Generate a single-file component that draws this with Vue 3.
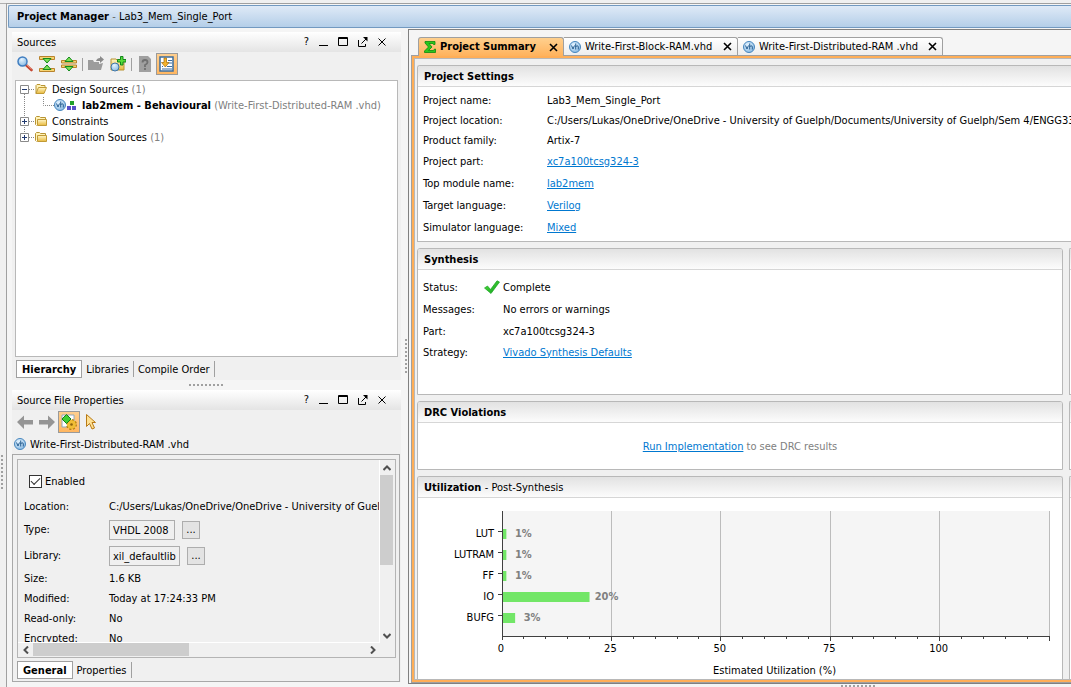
<script setup>
import { ref } from 'vue'

const enabled = ref(true)

const settings = [
  { label: 'Project name:', value: 'Lab3_Mem_Single_Port' },
  { label: 'Project location:', value: 'C:/Users/Lukas/OneDrive/OneDrive - University of Guelph/Documents/University of Guelph/Sem 4/ENGG3380' },
  { label: 'Product family:', value: 'Artix-7' },
  { label: 'Project part:', value: 'xc7a100tcsg324-3', link: true },
  { label: 'Top module name:', value: 'lab2mem', link: true },
  { label: 'Target language:', value: 'Verilog', link: true },
  { label: 'Simulator language:', value: 'Mixed', link: true },
]

const details = [
  { label: 'Size:', value: '1.6 KB' },
  { label: 'Modified:', value: 'Today at 17:24:33 PM' },
  { label: 'Read-only:', value: 'No' },
  { label: 'Encrypted:', value: 'No' },
]

const fields = [
  { id: 'type', label: 'Type:', value: 'VHDL 2008' },
  { id: 'library', label: 'Library:', value: 'xil_defaultlib' },
]

const editorTabs = [
  { id: 'block', label: 'Write-First-Block-RAM.vhd' },
  { id: 'dist', label: 'Write-First-Distributed-RAM .vhd' },
]

const axisMax = 125
const bars = [
  { name: 'LUT', value: 1 },
  { name: 'LUTRAM', value: 1 },
  { name: 'FF', value: 1 },
  { name: 'IO', value: 20 },
  { name: 'BUFG', value: 3 },
]
const pct = (v) => (v / axisMax) * 100 + '%'
const majors = [25, 50, 75, 100, 125]
const axisLabels = [0, 25, 50, 75, 100]
const minors = Array.from({ length: 24 }, (_, i) => (i + 1) * 5).filter((v) => v % 25)
</script>

<template>
  <div class="app">
    <svg class="defs" width="0" height="0" aria-hidden="true">
      <defs>
        <linearGradient id="gold" x1="0" y1="0" x2="0" y2="1">
          <stop offset="0" stop-color="#fff6c8" /><stop offset="1" stop-color="#e8b93c" />
        </linearGradient>
        <radialGradient id="ball" cx=".4" cy=".3" r=".8">
          <stop offset="0" stop-color="#e4f3ff" /><stop offset="1" stop-color="#7fb4e0" />
        </radialGradient>
        <linearGradient id="leaf" x1="0" y1="0" x2="1" y2="1">
          <stop offset="0" stop-color="#54e63c" /><stop offset="1" stop-color="#0f9a1e" />
        </linearGradient>
        <symbol id="vh" viewBox="0 0 12 12">
          <circle cx="6" cy="6" r="5.5" fill="url(#ball)" stroke="#4585bd" />
          <path d="M2.5 4.5 4 8l1.5-3.5M6.7 2.5V8.5M6.7 6Q7 4.8 8.2 4.8 9.3 4.8 9.3 6V8.5" fill="none" stroke="#285f92" />
        </symbol>
        <symbol id="folder" viewBox="0 0 12 11">
          <path d="M.5 8.5v-7l1-1h3l1 1h5v2M.5 8.5l1 1" fill="#fff3b8" stroke="#b89434" />
          <path d="M2.5 3.5h9v6h-9z" fill="url(#gold)" stroke="#c19a35" />
        </symbol>
        <symbol id="folder-open" viewBox="0 0 12 11">
          <path d="M1 9.5V1.5l1-1h3l1 1h4v2" fill="#fff3b8" stroke="#b89434" />
          <path d="M3.5 3.5h8l-2.5 6H1z" fill="url(#gold)" stroke="#c19a35" />
        </symbol>
        <symbol id="x" viewBox="0 0 9 9">
          <path d="M1 1 8 8M8 1 1 8" stroke="#000" stroke-width="1.6" />
        </symbol>
      </defs>
    </svg>

    <div class="edge"><i class="grip vertical"></i></div>

    <div class="shell">
      <header class="banner"><b>Project Manager</b><span class="dash"> - </span>Lab3_Mem_Single_Port</header>

      <div class="work">
        <aside class="side">
          <section class="sources">
            <div class="titlebar">
              <h2>Sources</h2>
              <div class="winbtns">
                <button aria-label="Help">?</button>
                <button aria-label="Minimize"><svg width="9" height="10"><path d="M0 8.500h9" stroke="#000" /></svg></button>
                <button aria-label="Maximize"><svg width="10" height="10"><path d="M.5.500h9v8h-9zM0 1.500h10" fill="none" stroke="#000" /></svg></button>
                <button aria-label="Float"><svg width="10" height="10"><path d="M.5 3v6.500h7V7M3.500 6.500 8 2" fill="none" stroke="#000" /><path d="M5 0h4.500v4.500z" /></svg></button>
                <button aria-label="Close"><svg width="8" height="8"><path d="M.5.5l7 7M7.500.5l-7 7" stroke="#000" /></svg></button>
              </div>
            </div>
            <div class="toolbar">
              <button aria-label="Search">
                <svg width="16" height="16"><path d="M9 9l5.500 5" stroke="#c44530" stroke-width="2.600" stroke-linecap="round" /><path d="M9 8l5.500 5" stroke="#f0a090" /><circle cx="5.500" cy="5.500" r="4.500" fill="url(#ball)" stroke="#3f7dc0" stroke-width="1.500" /></svg>
              </button>
              <button aria-label="Collapse all">
                <svg width="16" height="16"><path d="M.5.5h15v3h-15zM.5 12.500h15v3h-15z" fill="#f6d472" stroke="#b8832c" /><path d="M4 2.500h8L8 7zM4 13.500h8L8 9z" fill="#7ddf55" stroke="#128a1c" /></svg>
              </button>
              <button aria-label="Expand all">
                <svg width="16" height="16"><path d="M.5 4.500h15v2.500h-15zM.5 9h15v2.500h-15z" fill="#f6d472" stroke="#b8832c" /><path d="M4 5.500h8L8 1zM4 10.500h8L8 15z" fill="#7ddf55" stroke="#128a1c" /></svg>
              </button>
              <i class="sep"></i>
              <button aria-label="Open file" disabled>
                <svg width="16" height="16"><path d="M0 14V4h5l1 2h5v2l4-1-2 7z" fill="#9c9c9c" /><path d="M8 5q1-3 4-3V0l4 3.500L12 7V5q-2 0-4 0z" fill="#8b8b8b" /></svg>
              </button>
              <button aria-label="Add sources">
                <svg width="16" height="16"><path d="M1 14V3h5l1 1h7v10z" fill="url(#gold)" stroke="#b89434" /><circle cx="5" cy="11" r="4" fill="url(#ball)" stroke="#4076a8" /><path d="M10.500.5h2.500v3h3V6h-3v3h-2.500V6h-3V3.500h3z" fill="#56dc3a" stroke="#13871d" /></svg>
              </button>
              <i class="sep"></i>
              <button aria-label="Information" disabled>
                <svg width="16" height="16"><path d="M2 0h9l3 3v13H2z" fill="#a0a0a0" /><path d="M5.500 6.500Q5.500 4 8 4t2.500 2.300Q10.500 8 8 9v2M8 12v2" fill="none" stroke="#707070" stroke-width="1.800" /></svg>
              </button>
              <button class="on" aria-label="Auto scroll">
                <svg width="16" height="16"><path d="M1 1h13v14H1z" fill="#fff" stroke="#3b6da0" stroke-width="1.500" /><path d="M9 4.500h4M9 7h4M3 10.500h1M8 10.500h5M3 13h10" stroke="#3b6da0" /><path d="M5 2h2.500v4.500H10L6.300 11 2.500 6.500H5z" fill="#f6b42c" stroke="#a36a08" stroke-width=".7" /></svg>
              </button>
            </div>
            <ul class="tree">
              <li>
                <svg width="19" height="16"><path d="M8.500 13v3M13 8.500h6" class="dots" /><path d="M4.500 4.500h8v8h-8z" class="box" /><path d="M6 8.500h5" stroke="#223a70" /></svg>
                <svg class="fold" width="12" height="11"><use href="#folder-open" /></svg>
                <span>Design Sources <em>(1)</em></span>
              </li>
              <li>
                <svg width="38" height="16"><path d="M8.500 0v16M27.500 0v8.500H38" class="dots" /></svg>
                <svg width="12" height="12"><use href="#vh" /></svg>
                <svg class="mods" width="9" height="9"><path d="M3 0h4v4H3z" fill="#23a12b" /><path d="M0 5h4v4H0zM5 5h4v4H5z" fill="#5850c8" /></svg>
                <span><b>lab2mem - Behavioural</b> <em>(Write-First-Distributed-RAM .vhd)</em></span>
              </li>
              <li>
                <svg width="19" height="16"><path d="M8.500 0v16M13 8.500h6" class="dots" /><path d="M4.500 4.500h8v8h-8z" class="box" /><path d="M6 8.500h5M8.500 6v5" stroke="#223a70" /></svg>
                <svg class="fold" width="12" height="11"><use href="#folder" /></svg>
                <span>Constraints</span>
              </li>
              <li>
                <svg width="19" height="16"><path d="M8.500 0v4M13 8.500h6" class="dots" /><path d="M4.500 4.500h8v8h-8z" class="box" /><path d="M6 8.500h5M8.500 6v5" stroke="#223a70" /></svg>
                <svg class="fold" width="12" height="11"><use href="#folder" /></svg>
                <span>Simulation Sources <em>(1)</em></span>
              </li>
            </ul>
            <nav class="subtabs">
              <button class="active">Hierarchy</button>
              <button>Libraries</button>
              <button>Compile Order</button>
            </nav>
          </section>

          <div class="hsplit"><i class="grip"></i></div>

          <section class="props">
            <div class="titlebar">
              <h2>Source File Properties</h2>
              <div class="winbtns">
                <button aria-label="Help">?</button>
                <button aria-label="Minimize"><svg width="9" height="10"><path d="M0 8.500h9" stroke="#000" /></svg></button>
                <button aria-label="Maximize"><svg width="10" height="10"><path d="M.5.500h9v8h-9zM0 1.500h10" fill="none" stroke="#000" /></svg></button>
                <button aria-label="Float"><svg width="10" height="10"><path d="M.5 3v6.500h7V7M3.500 6.500 8 2" fill="none" stroke="#000" /><path d="M5 0h4.500v4.500z" /></svg></button>
                <button aria-label="Close"><svg width="8" height="8"><path d="M.5.5l7 7M7.500.5l-7 7" stroke="#000" /></svg></button>
              </div>
            </div>
            <div class="toolbar short">
              <button aria-label="Back" disabled><svg width="16" height="16"><path d="M0 8l7-6.500V6h9v4.500H7V15z" fill="#959595" /></svg></button>
              <button aria-label="Forward" disabled><svg width="16" height="16"><path d="M16 8L9 1.500V6H0v4.500h9V15z" fill="#959595" /></svg></button>
              <button class="on" aria-label="Auto update">
                <svg width="16" height="16"><path d="M1 1h12v12H1z" fill="#fff" stroke="#8fa8bd" /><circle cx="10.500" cy="10.500" r="4.500" fill="#f0bc30" stroke="#b5830f" stroke-width="2" stroke-dasharray="2 1.500" /><circle cx="10.500" cy="10.500" r="4.300" fill="#f0bd35" /><circle cx="10.500" cy="10.500" r="1.300" fill="#8a6110" /><path d="M5.500.5 10 5l-4.500 4.500L1 5z" fill="#3fce33" stroke="#167f18" /></svg>
              </button>
              <button aria-label="Select"><svg width="16" height="16"><path d="M3.500.5v12l3-3 2.500 5.500 2.500-1L9 8.500h3.500z" fill="#ffe092" stroke="#b87a16" /></svg></button>
            </div>
            <div class="filename"><svg width="12" height="12"><use href="#vh" /></svg><span>Write-First-Distributed-RAM .vhd</span></div>
            <div class="outer">
              <div class="scroller">
                <div class="form">
                  <label class="check"><input v-model="enabled" type="checkbox" />Enabled</label>
                  <div class="row"><span>Location:</span><span>C:/Users/Lukas/OneDrive/OneDrive - University of Guelph</span></div>
                  <div v-for="f in fields" :key="f.id" class="row tall">
                    <label :for="f.id">{{ f.label }}</label>
                    <input :id="f.id" :class="f.id" type="text" readonly :value="f.value" />
                    <button class="more" :aria-label="'Choose ' + f.id">...</button>
                  </div>
                  <div v-for="d in details" :key="d.label" class="row"><span>{{ d.label }}</span><span>{{ d.value }}</span></div>
                </div>
                <div class="vbar">
                  <button aria-label="Scroll up"><svg width="8" height="6"><path d="M.5 5 4 1.500 7.500 5" class="chev" /></svg></button>
                  <i></i>
                  <button aria-label="Scroll down"><svg width="8" height="6"><path d="M.5 1 4 4.500 7.500 1" class="chev" /></svg></button>
                </div>
                <div class="hbar">
                  <button aria-label="Scroll left"><svg width="6" height="8"><path d="M5 .5 1.500 4 5 7.500" class="chev" /></svg></button>
                  <i></i>
                  <button aria-label="Scroll right"><svg width="6" height="8"><path d="M1 .5 4.500 4 1 7.500" class="chev" /></svg></button>
                </div>
              </div>
              <nav class="subtabs">
                <button class="active">General</button>
                <button>Properties</button>
              </nav>
            </div>
          </section>
        </aside>

        <div class="vsplit"><i class="grip vertical"></i></div>

        <div class="mainwrap">
          <main class="editor">
            <div class="tabs">
              <div class="tab current">
                <svg width="12" height="12"><path d="M1 .5h10V3.500H9.500L9 2.500H5L8 6 4.500 9.500H9.500L10.500 8h1v3.500H.5V10L4.500 6 1 2z" fill="#2bc71c" stroke="#0c8a10" stroke-width=".8" /></svg>
                <b>Project Summary</b>
                <button aria-label="Close Project Summary"><svg width="9" height="9"><use href="#x" /></svg></button>
              </div>
              <div v-for="t in editorTabs" :key="t.id" class="tab" :class="t.id">
                <svg width="12" height="12"><use href="#vh" /></svg>
                <span>{{ t.label }}</span>
                <button :aria-label="'Close ' + t.label"><svg width="9" height="9"><use href="#x" /></svg></button>
              </div>
            </div>

            <div class="page">
              <section class="panel settings">
                <h3>Project Settings</h3>
                <dl>
                  <div v-for="s in settings" :key="s.label" :class="{ linked: s.link }">
                    <dt>{{ s.label }}</dt>
                    <dd><a v-if="s.link" href="#">{{ s.value }}</a><template v-else>{{ s.value }}</template></dd>
                  </div>
                </dl>
              </section>

              <section class="panel synthesis">
                <h3>Synthesis</h3>
                <dl>
                  <div class="linked">
                    <dt>Status:</dt>
                    <dd><svg class="tick" width="16" height="14"><path d="M.5 8 3.500 6 6.500 9.500 13 .8 15.500 2 7 13.500z" fill="url(#leaf)" stroke="#17a023" stroke-width=".7" /></svg>Complete</dd>
                  </div>
                  <div class="linked"><dt>Messages:</dt><dd>No errors or warnings</dd></div>
                  <div><dt>Part:</dt><dd>xc7a100tcsg324-3</dd></div>
                  <div><dt>Strategy:</dt><dd><a href="#">Vivado Synthesis Defaults</a></dd></div>
                </dl>
              </section>
              <section class="panel next"><h3></h3></section>

              <section class="panel drc">
                <h3>DRC Violations</h3>
                <p><a href="#">Run Implementation</a> to see DRC results</p>
              </section>
              <section class="panel next"><h3></h3></section>

              <section class="panel util">
                <h3>Utilization <span>- Post-Synthesis</span></h3>
                <div class="chart">
                  <svg width="100%" height="168" role="img" aria-label="Estimated utilization by resource">
                    <rect width="100%" height="125" fill="#f5f5f5" />
                    <line v-for="m in majors" :key="m" :x1="pct(m)" :x2="pct(m)" y1="0" y2="125" stroke="#bcbcbc" />
                    <g v-for="(b, i) in bars" :key="b.name">
                      <rect x="0" :y="18 + i * 21" :width="pct(b.value)" height="10" fill="#72e667" />
                      <line x1="-4" x2="0" :y1="20 + i * 21" :y2="20 + i * 21" class="axis" />
                      <text x="-8" :y="26 + i * 21" text-anchor="end">{{ b.name }}</text>
                      <text :x="pct(b.value)" dx="17" :y="26 + i * 21" text-anchor="middle" class="val">{{ b.value }}%</text>
                    </g>
                    <line x1="0" x2="0" y1="0" y2="129" class="axis" />
                    <line x1="0" x2="100%" y1="125" y2="125" class="axis" />
                    <line v-for="m in minors" :key="m" :x1="pct(m)" :x2="pct(m)" y1="125" y2="128" class="axis" />
                    <line v-for="m in majors" :key="'t' + m" :x1="pct(m)" :x2="pct(m)" y1="125" y2="130" class="axis" />
                    <text v-for="a in axisLabels" :key="a" :x="pct(a)" dx="-1" y="141" text-anchor="middle">{{ a }}</text>
                    <text x="50%" dx="-1" y="163" text-anchor="middle">Estimated Utilization (%)</text>
                  </svg>
                </div>
              </section>
              <section class="panel next"><h3></h3></section>
            </div>
          </main>
          <div class="foot"><i class="grip"></i></div>
        </div>
      </div>
    </div>
  </div>
</template>

<style>
body { background: #f0f0f0; overflow: hidden; }
</style>

<style scoped>
.app {
  box-sizing: border-box;
  height: 100vh;
  padding-top: 3px;
  display: flex;
  background: #f0f0f0;
  color: #000;
  font: 11px/16px "DejaVu Sans Condensed", "DejaVu Sans", sans-serif;
  white-space: nowrap;
}
.app *, .app *::after { box-sizing: border-box; }
.defs { position: absolute; }
svg { display: block; flex: none; }
button { font: inherit; color: inherit; border: 0; padding: 0; margin: 0; background: none; display: flex; align-items: center; justify-content: center; flex: none; }
h2, h3, p, dl, dd, ul { margin: 0; padding: 0; font-size: inherit; }
a { color: #0078d0; }
em { font-style: normal; color: #808080; }

.edge { width: 6px; flex: none; display: flex; align-items: flex-end; padding: 0 0 197px 1px; border-top: 1px solid #b0b0b0; }
.grip { display: block; width: 35px; height: 2px; background: repeating-linear-gradient(90deg, #a0a0a0 0 2px, transparent 2px 4px); }
.grip.vertical { width: 2px; height: 35px; background: repeating-linear-gradient(#a0a0a0 0 2px, transparent 2px 4px); }

.shell { flex: 1; min-width: 0; display: flex; flex-direction: column; border-left: 1px solid #a0a0a0; border-top: 1px solid #a0a0a0; background: #f5f5f5; padding: 1px 0 0 1px; }
.banner { height: 23px; flex: none; border: 1px solid #7299c0; border-right: 0; border-radius: 2px 0 0 2px; background: linear-gradient(#dfeaf7, #b4cee8); line-height: 22px; padding-left: 8px; }
.dash { color: #666; white-space: pre; }
.work { flex: 1; min-height: 0; display: flex; padding-top: 1px; }

.side { width: 389px; flex: none; margin-left: 4px; padding-top: 3px; display: flex; flex-direction: column; }
.sources { flex: 1; min-height: 0; display: flex; flex-direction: column; background: #f0f0f0; }
.titlebar { height: 20px; flex: none; display: flex; align-items: center; justify-content: space-between; padding: 0 15px 0 5px; background: linear-gradient(#fff, #e4e4e4); }
.titlebar h2 { font-weight: normal; padding-top: 1px; }
.winbtns { display: flex; align-items: center; gap: 10px; }
.toolbar { height: 27px; flex: none; display: flex; align-items: center; gap: 6px; padding: 0 4px 3px 5px; }
.toolbar.short { height: 24px; padding-bottom: 0; }
.toolbar .on { width: 22px; height: 22px; margin: 0 -3px; background: linear-gradient(#ffcf8f, #ffb660); border: 1px solid #9a9a9a; }
.sep { width: 1px; height: 13px; background: #a0a0a0; margin: 0 -1px; }
.tree { flex: 1; margin: 1px 3px 0 3px; background: #fff; border: 1px solid #b8b8b8; list-style: none; }
.tree li { display: flex; align-items: center; height: 16px; }
.tree li span { padding-top: 1px; }
.tree .fold { margin-right: 5px; }
.tree .mods { margin: 0 6px 0 1px; }
.dots { fill: none; stroke: #888; stroke-dasharray: 1 1; }
.box { fill: #fff; stroke: #8a8a8a; }
.subtabs { display: flex; flex: none; height: 23px; padding: 3px 0 2px 4px; }
.subtabs button { padding: 1px 4px 0 4px; border-right: 1px solid #a0a0a0; margin: 1px 0; }
.subtabs .active { margin: 0; padding: 1px 5px 0; border: 1px solid #a0a0a0; background: #fff; font-weight: bold; }
.hsplit { height: 10px; flex: none; display: flex; align-items: center; justify-content: center; }

.props { height: 292px; flex: none; margin-bottom: 5px; display: flex; flex-direction: column; background: #f0f0f0; }
.filename { height: 20px; flex: none; display: flex; align-items: center; gap: 4px; padding-left: 2px; }
.filename span { padding-top: 1px; }
.outer { flex: 1; min-height: 0; border: 1px solid #a8a8a8; margin-right: 1px; padding: 4px 3px 0 4px; display: flex; flex-direction: column; }
.outer .subtabs { padding: 3px 0 2px 0; }
.scroller { flex: 1; min-height: 0; border: 1px solid #b4b4b4; display: grid; grid-template: minmax(0, 1fr) 14px / minmax(0, 1fr) 15px; }
.form { overflow: hidden; padding-left: 6px; border-right: 1px solid #fff; border-bottom: 1px solid #fff; }
.check { display: flex; align-items: center; gap: 3px; height: 37px; padding: 6px 0 0 5px; }
.check input { appearance: none; width: 13px; height: 13px; margin: 0; border: 1px solid #333; background: #fff; display: grid; place-items: center; }
.check input:checked::after { content: ""; width: 9px; height: 5px; border: solid #333; border-width: 0 0 1px 1px; transform: rotate(-45deg) translate(1px, -1px); }
.row { display: flex; align-items: center; height: 20px; }
.row > :first-child { width: 85px; flex: none; }
.row.tall { height: 26px; }
.row input { font: inherit; color: inherit; height: 20px; width: 66px; padding: 0 3px; border: 1px solid #adadad; background: #f0f0f0; }
.row input.library { width: 71px; }
.more { width: 18px; height: 18px; margin-left: 7px; border: 1px solid #adadad; background: #e3e3e3; }
.chev { fill: none; stroke: #505050; stroke-width: 2; }
.vbar { display: flex; flex-direction: column; }
.vbar button { height: 15px; width: 13px; }
.vbar i { height: 90px; width: 13px; background: #cdcdcd; }
.vbar button:last-child { margin: auto 0 0; }
.hbar { display: flex; height: 13px; }
.hbar button { width: 15px; height: 13px; }
.hbar i { width: 156px; background: #cdcdcd; }
.hbar button:last-child { margin: 0 0 0 auto; }

.vsplit { width: 7px; flex: none; padding: 310px 0 0 4px; }
.mainwrap { flex: 1; min-width: 0; display: flex; flex-direction: column; }
.editor { flex: 1; min-height: 0; border: solid #808080; border-width: 1px 0 1px 1px; padding: 7px 0 0 2px; display: flex; flex-direction: column; background: #f5f5f5; }
.foot { height: 3px; flex: none; display: flex; justify-content: flex-end; padding: 1px 195px 0 0; }
.tabs { display: flex; height: 18px; flex: none; padding-left: 7px; }
.tab { display: flex; align-items: center; gap: 4px; width: 174px; padding: 0 5px; border: 1px solid #a0a0a0; border-width: 1px 1px 0 0; border-radius: 0 3px 0 0; background: linear-gradient(#fff, #ededed); }
.tab.dist { width: 205px; }
.tab button { margin-left: auto; }
.tab.current { width: 146px; border-left-width: 1px; border-radius: 3px 3px 0 0; background: linear-gradient(#ffd08e, #ffb25c); margin-bottom: -1px; position: relative; }
.page { flex: 1; min-height: 0; overflow: hidden; border: solid #a0a0a0; border-width: 1px 0 1px 1px; box-shadow: inset 2px 2px #ffae57, inset 0 -2px #ffae57, inset 3px 3px #b8b8b8, inset 0 -3px #b8b8b8; background: #f0f0f0; padding: 9px 0 3px 5px; display: grid; grid-template-columns: minmax(0, 1fr) 2px; grid-template-rows: 177px 147px 69px minmax(0, 1fr); gap: 6px; }
.panel { min-width: 0; overflow: hidden; border: 1px solid #b8b8b8; border-radius: 3px 3px 0 0; background: #fff; }
.panel h3 { height: 21px; line-height: 21px; padding-left: 6px; border-bottom: 1px solid #d6d6d6; background: linear-gradient(#e2e2e2, #fcfcfc); }
.panel h3 span { font-weight: normal; }
.settings { grid-column: 1 / 3; border-right: 0; border-radius: 3px 0 0 0; }
.next { border-right: 0; border-radius: 2px 0 0 0; }
.util, .util + .next { border-bottom: 0; }
dl { padding: 4px 0 0 5px; }
dl div { display: flex; align-items: center; height: 20px; }
dl .linked { height: 22px; }
dt { width: 124px; flex: none; }
.synthesis dl { padding-top: 7px; }
.synthesis dl div:not(.linked) { height: 21px; }
.synthesis dt { width: 80px; }
.synthesis dd { position: relative; }
.tick { position: absolute; right: 100%; top: 0; margin-right: 3px; }
.drc p { line-height: 48px; text-align: center; color: #808080; }
.chart { padding: 13px 13px 0 84px; }
.chart svg { overflow: visible; }
.axis { stroke: #404040; shape-rendering: crispEdges; }
.chart line { shape-rendering: crispEdges; }
.chart .val { font-weight: bold; fill: #808080; }
</style>
